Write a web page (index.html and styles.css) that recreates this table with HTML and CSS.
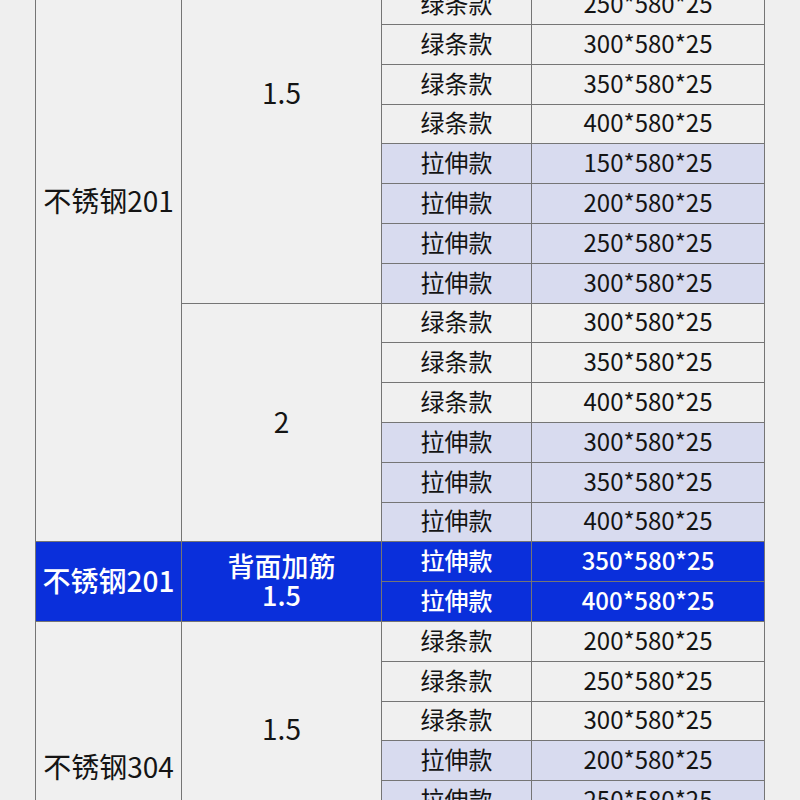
FILE: index.html
```html
<!DOCTYPE html>
<html lang="zh">
<head>
<meta charset="utf-8">
<link rel="stylesheet" href="styles.css">
</head>
<body>
<div class="sheet">
  <div class="mat span16 up44">不锈钢201</div>
  <div class="thick span10 up22">1.5</div>
  <div class="g">绿条款</div><div class="g">150*580*25</div>
  <div class="g">绿条款</div><div class="g">200*580*25</div>
  <div class="g">绿条款</div><div class="g">250*580*25</div>
  <div class="g">绿条款</div><div class="g">300*580*25</div>
  <div class="g">绿条款</div><div class="g">350*580*25</div>
  <div class="g">绿条款</div><div class="g">400*580*25</div>
  <div class="s">拉伸款</div><div class="s">150*580*25</div>
  <div class="s">拉伸款</div><div class="s">200*580*25</div>
  <div class="s">拉伸款</div><div class="s">250*580*25</div>
  <div class="s">拉伸款</div><div class="s">300*580*25</div>
  <div class="thick span6">2</div>
  <div class="g">绿条款</div><div class="g">300*580*25</div>
  <div class="g">绿条款</div><div class="g">350*580*25</div>
  <div class="g">绿条款</div><div class="g">400*580*25</div>
  <div class="s">拉伸款</div><div class="s">300*580*25</div>
  <div class="s">拉伸款</div><div class="s">350*580*25</div>
  <div class="s">拉伸款</div><div class="s">400*580*25</div>

  <div class="mat span2 hl">不锈钢201</div>
  <div class="thick span2 hl two">背面加筋<br>1.5</div>
  <div class="b hl">拉伸款</div><div class="b hl">350*580*25</div>
  <div class="b hl">拉伸款</div><div class="b hl">400*580*25</div>

  <div class="mat span6 down54">不锈钢304</div>
  <div class="thick span6 up22">1.5</div>
  <div class="g">绿条款</div><div class="g">200*580*25</div>
  <div class="g">绿条款</div><div class="g">250*580*25</div>
  <div class="g">绿条款</div><div class="g">300*580*25</div>
  <div class="s">拉伸款</div><div class="s">200*580*25</div>
  <div class="s">拉伸款</div><div class="s">250*580*25</div>
  <div class="s">拉伸款</div><div class="s">300*580*25</div>
</div>
</body>
</html>
```
FILE: styles.css
```css
html, body {
  margin: 0;
  padding: 0;
  background: #efefef;
  height: 800px;
  overflow: hidden;
}
body {
  font-family: "Noto Sans CJK SC", "Noto Sans", sans-serif;
  color: #141414;
}
.sheet {
  margin: -95.4px 0 0 35px;
  width: 728px;
  padding: 1px;
  background: #757575;
  display: grid;
  grid-template-columns: 145px 199px 149px 232px;
  grid-auto-rows: 38.8px;
  gap: 1px;
}
.sheet > div {
  display: flex;
  align-items: center;
  justify-content: center;
  text-align: center;
  background: #f0f0f0;
  font-size: 24px;
  line-height: 1;
  padding-bottom: 3px;
  box-sizing: border-box;
}
.mat, .thick {
  font-size: 28px !important;
}
.span16 { grid-row: span 16; }
.span10 { grid-row: span 10; }
.span6 { grid-row: span 6; }
.span2 { grid-row: span 2; }
.sheet > .up44 { padding-bottom: 46px; }
.sheet > .up22 { padding-bottom: 25px; }
.sheet > .down54 { padding-top: 50px; padding-bottom: 0; }
.s { background: #d8dbef !important; }
.hl {
  background: #0a2fdb !important;
  color: #ffffff;
  font-weight: 500;
}
.sheet > .two {
  line-height: 29px;
  font-size: 27px !important;
  padding-bottom: 4px;
}
```
